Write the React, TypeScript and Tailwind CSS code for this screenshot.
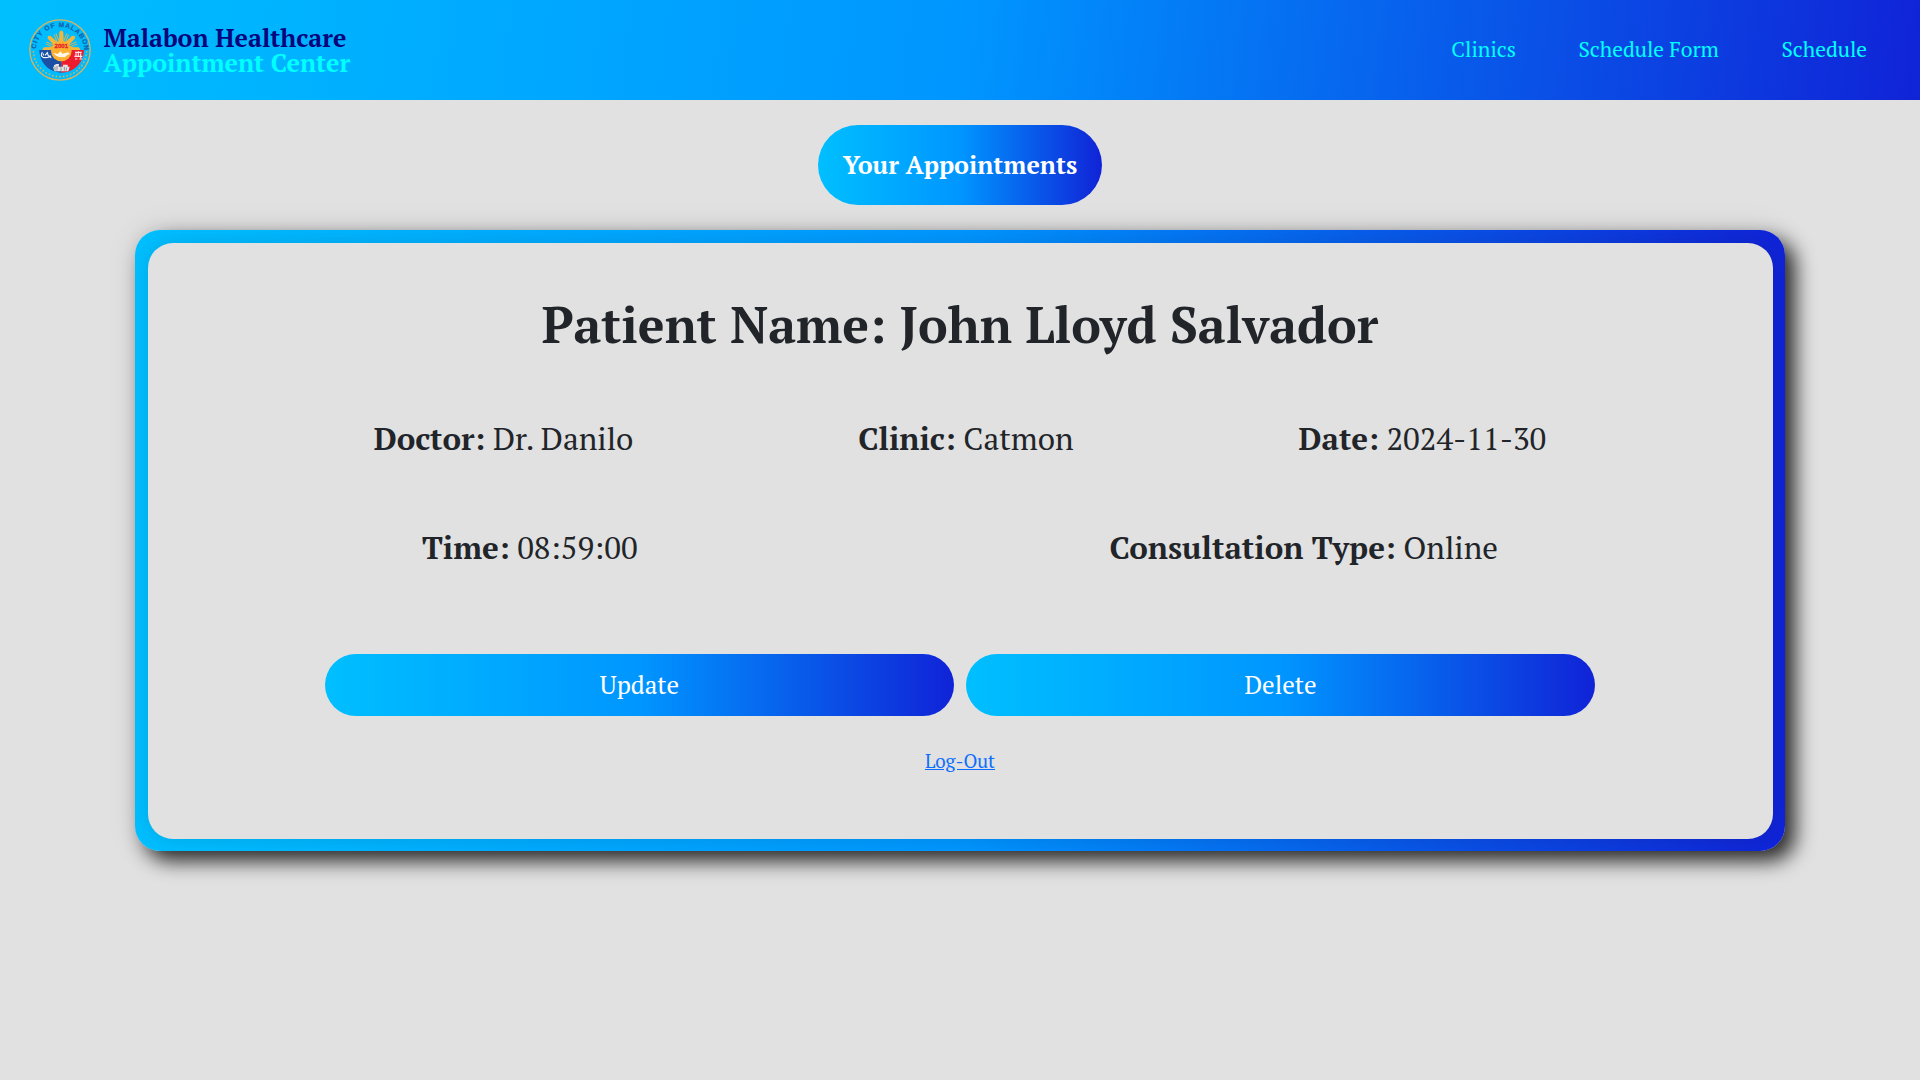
function Seal() {
  const rays = [-90, -67.5, -45, -22.5, 0, 180, 202.5, 225, 247.5];
  const stars = Array.from({ length: 23 }, (_, i) => {
    const a = ((4 + (i * 172) / 22) * Math.PI) / 180;
    return { x: 115 + 80 * Math.cos(a), y: 120 + 80 * Math.sin(a) };
  });
  return (
    <svg viewBox="22 27 186 186" className="h-[62px] w-[62px] shrink-0" textRendering="geometricPrecision">
      <defs>
        <path id="seal-arc" d="M42 124 A73 73 0 1 1 188 124" />
      </defs>
      <circle cx="115" cy="120" r="90.5" fill="none" stroke="#d9b35a" strokeWidth="4" />
      <text
        fontFamily="'Liberation Sans', sans-serif"
        fontWeight="700"
        fontSize="20"
        fill="#0f62ac"
        stroke="#0f62ac"
        strokeWidth="0.6"
      >
        <textPath href="#seal-arc" startOffset="7" textLength="219" lengthAdjust="spacing">
          CITY OF MALABON
        </textPath>
      </text>
      {stars.map((s) => (
        <circle key={s.x} cx={s.x} cy={s.y} r="2.6" fill="#d2b653" />
      ))}
      {rays.map((a) => (
        <g key={a} transform={`rotate(${a} 119 118)`}>
          {a % 45 === 0 ? (
            <path d="M140 111 L171 112 L176 118 L171 124 L140 125Z" fill="#f3b53a" />
          ) : (
            <path d="M145 115 H169 M145 121 H169" stroke="#d0b75a" strokeWidth="3" fill="none" />
          )}
        </g>
      ))}
      <path d="M53 120 H119 V188 C82 186 54 160 53 120Z" fill="#1c50a4" />
      <path d="M119 120 H187 C185 160 156 188 119 188Z" fill="#ee1c2c" />
      <circle cx="119" cy="123" r="31" fill="#fbb031" />
      <text
        x="119"
        y="115"
        textAnchor="middle"
        textLength="41"
        lengthAdjust="spacingAndGlyphs"
        fontFamily="'Liberation Sans', sans-serif"
        fontWeight="700"
        fontSize="18"
        fill="#e8202b"
        stroke="#e8202b"
        strokeWidth="0.8"
      >
        2001
      </text>
      <path
        d="M94 128 L108 132 L117 124 L122 131 L140 127 L144 132 L136 136 L129 142 L113 141 L103 137Z"
        fill="#fff8ea"
      />
      <path
        d="M62 126 Q55 137 64 142 Q75 144 85 140 L89 143 M70 136 L77 128 L80 138 L88 138 M64 130 L66 136"
        fill="none"
        stroke="#eef3fa"
        strokeWidth="3.5"
      />
      <path
        d="M160 127 H180 M170 124 V138 M158 139 H182 M163 130 V138 M177 130 V145 M160 147 H167 M173 147 H182"
        fill="none"
        stroke="#ffe9ea"
        strokeWidth="3.5"
      />
      <path
        d="M94 170 H144 L140 184 H98Z M97 166 L104 162 H112 V170 H97Z M124 164 H138 V172 H124Z"
        fill="#e6e6e6"
      />
      <path
        d="M100 170 V182 M106 168 V182 M112 166 V170 M118 172 V184 M128 170 V182 M134 172 V182"
        stroke="#55585e"
        strokeWidth="1.8"
      />
    </svg>
  );
}

function Field({ label, value }: { label: string; value: string }) {
  return (
    <p className="whitespace-nowrap">
      <b>{label}</b> {value}
    </p>
  );
}

const gradient = "bg-[linear-gradient(90deg,#00bfff_0%,#0096ff_50%,#1023d7_100%)]";
const headerGradient = "bg-[linear-gradient(97deg,#00bfff_0%,#0096ff_50%,#1023d7_100%)]";

export default function App() {
  return (
    <div className="min-h-screen bg-[#e1e1e1] font-['PT_Serif','Noto_Serif',serif] text-[#212529]">
      <header className={`flex h-[100px] items-center justify-between pl-[28.5px] pr-[53px] ${headerGradient}`}>
        <div className="flex items-center gap-[13px]">
          <Seal />
          <div className="text-[25px] font-bold leading-[25px]">
            <div className="text-[#05057c]">Malabon Healthcare</div>
            <div className="text-[#00ffff]">Appointment Center</div>
          </div>
        </div>
        <nav className="flex gap-[62.5px] text-[21.25px] text-[#00ffff]">
          <a href="#">Clinics</a>
          <a href="#">Schedule Form</a>
          <a href="#">Schedule</a>
        </nav>
      </header>

      <main className="flex flex-col items-center pt-[25px]">
        <h1 className={`flex h-20 items-center rounded-[40px] px-[25px] text-[25px] font-bold text-white ${gradient}`}>
          Your Appointments
        </h1>

        <section
          className={`mt-[25px] h-[621px] w-[1650px] rounded-[25px] p-[12.5px] shadow-[10px_10px_20px_rgba(0,0,0,0.8),0_0_30px_rgba(0,0,0,0.1)] ${gradient}`}
        >
          <div className="flex h-full flex-col items-center rounded-[25px] bg-[#e1e1e1] pt-[51px] shadow-[0_0_20px_rgba(0,0,0,0.12)]">
            <h2 className="text-[50px] font-bold leading-[60px]">Patient Name: John Lloyd Salvador</h2>
            <div className="mt-[61px] flex w-[1172.5px] justify-between text-[31.25px] leading-[47px]">
              <Field label="Doctor:" value="Dr. Danilo" />
              <Field label="Clinic:" value="Catmon" />
              <Field label="Date:" value="2024-11-30" />
            </div>
            <div className="mt-[62px] flex w-[1076px] justify-between text-[31.25px] leading-[47px]">
              <Field label="Time:" value="08:59:00" />
              <Field label="Consultation Type:" value="Online" />
            </div>
            <div className="mt-[83px] flex w-[1270px] gap-3 text-[25px] text-white">
              <button className={`h-[62px] flex-1 rounded-[31px] ${gradient}`}>Update</button>
              <button className={`h-[62px] flex-1 rounded-[31px] ${gradient}`}>Delete</button>
            </div>
            <a href="#" className="mt-[31px] text-[18.75px] leading-7 text-[#0d6efd] underline">
              Log-Out
            </a>
          </div>
        </section>
      </main>
    </div>
  );
}
